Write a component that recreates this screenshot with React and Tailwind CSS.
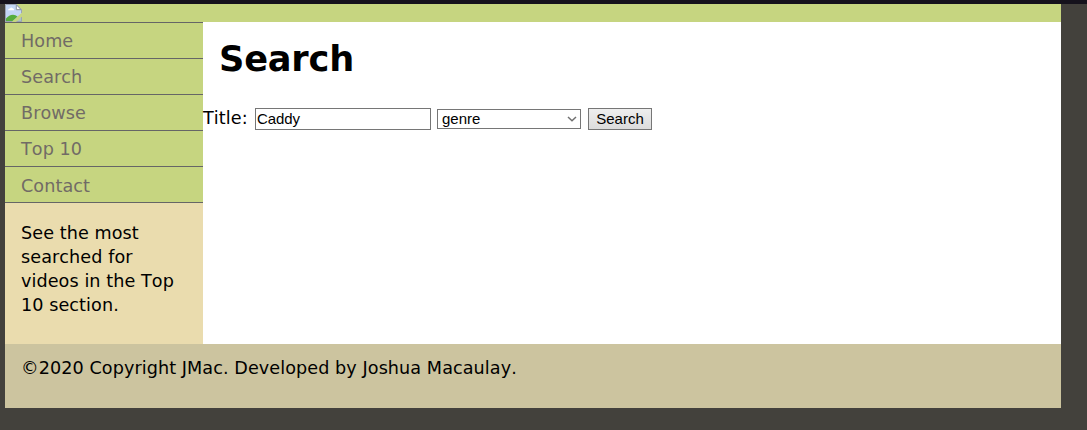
const navItems = ["Home", "Search", "Browse", "Top 10", "Contact"];
const noteLines = ["See the most", "searched for", "videos in the Top", "10 section."];

function BrokenImage() {
  return (
    <svg className="block h-[18px] w-[17px]" viewBox="0 0 17 18" aria-hidden="true">
      <path d="M0.5 0.5H11.5L16.5 5.5V9L7 17.5H0.5Z" fill="#c3d6f5" />
      <path d="M3 6.2Q3.3 4.2 5 4.5Q6 2.6 7.7 4.2Q9.5 4.6 9 6.2Z" fill="#fff" />
      <path d="M1 17.5V14.5Q4 10.8 8 10.7Q10.5 10.7 12.5 12.5L7 17.5Z" fill="#55ad3c" />
      <path d="M12 17.5L16.5 13V17.5Z" fill="#a9c4c4" />
      <path d="M11.3 0.8V5.7H16.2Z" fill="#fff" stroke="#8b929c" />
      <path d="M7 17.5H0.5V0.5H11.5L16.5 5.5V9M16.5 13V17.5H11.5" fill="none" stroke="#9ba3b5" />
    </svg>
  );
}

export default function App() {
  return (
    <div className="h-[430px] w-[1087px] overflow-hidden border-t-4 border-[#15121c] bg-[#43413c] pl-[5px] font-['DejaVu_Sans',sans-serif] text-[17.6px] tracking-[0.08px] text-black [font-kerning:none]">
      <div className="w-[1056px] bg-white">
        <header className="h-[18px] bg-[#c6d580]">
          <BrokenImage />
        </header>
        <div className="flex h-[322px]">
          <aside className="w-[198px] shrink-0 bg-[#eadcae]">
            <nav className="border-t border-[#666666]">
              {navItems.map((item) => (
                <a key={item} href="#" className="flex h-9 items-center border-b border-[#666666] bg-[#c6d580] pl-4 pt-0.5 text-[#716b66] last:pt-1">
                  {item}
                </a>
              ))}
            </nav>
            <p className="pl-4 pt-[18px] leading-6">
              {noteLines.map((line) => (
                <span key={line} className="block whitespace-nowrap">{line}</span>
              ))}
            </p>
          </aside>
          <main className="flex-1">
            <h1 className="pl-4 pt-3 text-[35.2px] font-bold leading-[50px] tracking-[-0.2px]">Search</h1>
            <form className="mt-6 flex h-[22px] items-center font-['Liberation_Sans',sans-serif] text-[15px] tracking-normal">
              <label htmlFor="title" className="w-[52px] shrink-0 pb-[3px] font-['DejaVu_Sans',sans-serif] text-[17.6px] leading-5 tracking-[0.1px]">Title:</label>
              <input id="title" defaultValue="Caddy" className="h-[22px] w-[176px] border border-[#767676] bg-white px-px tracking-[-0.1px] outline-none" />
              <div className="ml-1.5 flex h-5 w-[144px] items-center justify-between border border-[#767676] pl-1 pr-[3px] leading-none">
                <span className="pb-0.5">genre</span>
                <svg className="h-[6px] w-[10px]" viewBox="0 0 10 6" fill="none" stroke="#707070" strokeWidth="1.5" aria-hidden="true">
                  <path d="M1 1L5 4.7L9 1" />
                </svg>
              </div>
              <button type="button" className="ml-[7px] h-[22px] w-16 border border-[#767676] bg-linear-to-b from-[#eeeeee] to-[#dcdcdc] leading-5">Search</button>
            </form>
          </main>
        </div>
        <footer className="h-16 bg-[#ccc49f] pl-4 pt-3 leading-6">©2020 Copyright JMac. Developed by Joshua Macaulay.</footer>
      </div>
    </div>
  );
}
